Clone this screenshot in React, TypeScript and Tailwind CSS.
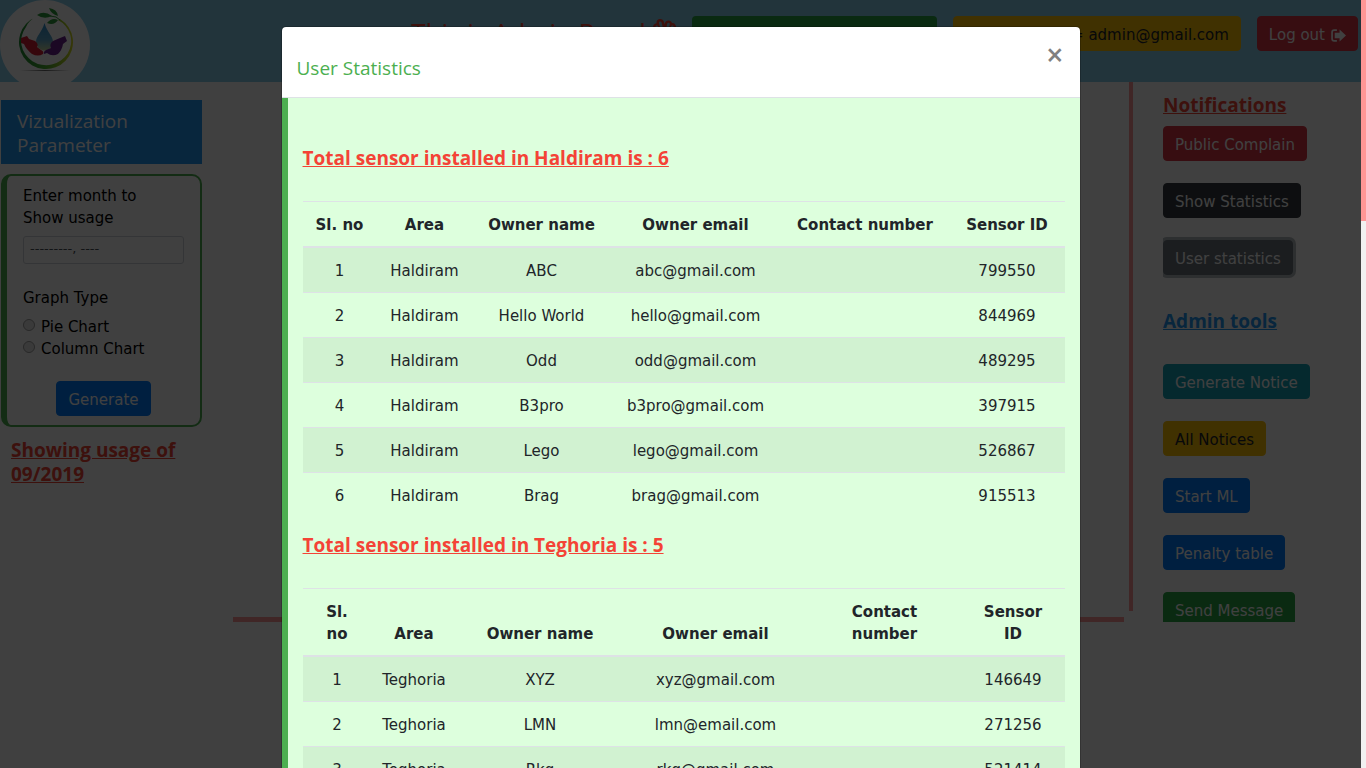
import React from "react";
import { FaRegHandSpock } from "react-icons/fa";

const sensorTables = [
  {
    title: "Total sensor installed in Haldiram is : 6",
    area: "Haldiram",
    cols: ["w-[73px]", "w-[97px]", "w-[137px]", "w-[171px]", "w-[168px]", "w-[116px]"],
    headings: [["Sl. no"], ["Area"], ["Owner name"], ["Owner email"], ["Contact number"], ["Sensor ID"]],
    rows: [
      ["ABC", "abc@gmail.com", "799550"],
      ["Hello World", "hello@gmail.com", "844969"],
      ["Odd", "odd@gmail.com", "489295"],
      ["B3pro", "b3pro@gmail.com", "397915"],
      ["Lego", "lego@gmail.com", "526867"],
      ["Brag", "brag@gmail.com", "915513"],
    ],
  },
  {
    title: "Total sensor installed in Teghoria is : 5",
    area: "Teghoria",
    cols: ["w-[68px]", "w-[86px]", "w-[166px]", "w-[185px]", "w-[153px]", "w-[104px]"],
    headings: [["Sl.", "no"], ["Area"], ["Owner name"], ["Owner email"], ["Contact", "number"], ["Sensor", "ID"]],
    rows: [
      ["XYZ", "xyz@gmail.com", "146649"],
      ["LMN", "lmn@email.com", "271256"],
      ["Rkg", "rkg@gmail.com", "521414"],
    ],
  },
];

const heading = "font-['Open_Sans',sans-serif] text-[19px] leading-6";
const btn = "rounded-[4px] border px-[11px] pt-[7px] pb-1 text-[15px] leading-[22px] whitespace-nowrap";

function Logo() {
  return (
    <svg viewBox="0 0 90 90" className="size-[90px] shrink-0" role="img" aria-label="Logo">
      <defs>
        <linearGradient id="ring" x1="0" y1="0" x2="1" y2="0">
          <stop offset="0" stopColor="#1c8a32" />
          <stop offset="0.5" stopColor="#4caf30" />
          <stop offset="1" stopColor="#d8dc20" />
        </linearGradient>
        <linearGradient id="drop" x1="0" y1="0" x2="0" y2="1">
          <stop offset="0" stopColor="#2f8fd0" />
          <stop offset="0.6" stopColor="#5ba8d0" />
          <stop offset="1" stopColor="#c8d8a0" />
        </linearGradient>
        <linearGradient id="shade" x1="0" y1="0" x2="1" y2="0">
          <stop offset="0" stopColor="#fff" />
          <stop offset="0.5" stopColor="#666" />
          <stop offset="1" stopColor="#fff" />
        </linearGradient>
      </defs>
      <circle cx="45" cy="45" r="45" fill="#fff" />
      <path fill="url(#ring)" d="M36 17A27 27 0 1 0 60 19L58 20A25 24 0 1 1 26 27Q29 20 36 17Z" />
      <path fill="#2f9c3c" d="M37 15Q44 10 52 16Q44 20 37 15ZM49 8Q57 9 58 16Q51 14 49 8ZM47 23Q52 17 58 20Q54 26 47 23Z" />
      <path fill="none" stroke="#2f9c3c" d="M50 16Q57 16 60 20" />
      <path fill="url(#drop)" d="M44.500 23C42 32 36 36 36 42A8.500 8.500 0 0 0 53 42C53 36 47 32 44.500 23Z" />
      <path fill="#d51f30" d="M21 38L27 36L29 39L35 41Q39 44 37 47L41 50Q44 51 43 54Q38 57 32 54Q26 49 24 44L21 43Z" />
      <path fill="#6b2390" d="M67 41L65 36L60 38L53 41Q49 44 51 48L46 50Q43 52 44 54L47 53Q52 57 58 54Q62 50 63 44Z" />
      <path fill="url(#shade)" d="M20 70H70V71H20Z" />
    </svg>
  );
}

function LogOutIcon() {
  return (
    <svg viewBox="0 0 14 12" className="h-[13px] w-[15px]" aria-hidden="true">
      <path fill="none" stroke="currentColor" strokeWidth="1.600" d="M5.500 1H3Q1 1 1 3V9Q1 11 3 11H5.500" />
      <path fill="currentColor" d="M8 0.500L14 6L8 11.500V8.500H3.500V3.500H8Z" />
    </svg>
  );
}

function Header() {
  return (
    <header className="flex h-[82px] items-start overflow-hidden bg-[#87ceeb]">
      <Logo />
      <div className="flex flex-1 items-start justify-end gap-4 pt-4 pr-[3px]">
        <h3 className="flex items-center gap-1 pt-[2px] font-['Open_Sans',sans-serif] text-[26px] leading-7 text-[#f44336]">
          This is Admin Panel <FaRegHandSpock />
        </h3>
        <button aria-label="Admin" className="h-[35px] w-[245px] rounded-[4px] bg-[#28a745]" />
        <button className={`${btn} w-[288px] border-[#ffc107] bg-[#ffc107] text-right text-[#212529]`}>
          = admin@gmail.com
        </button>
        <button className={`${btn} flex items-center gap-[6px] border-[#dc3545] bg-[#dc3545] text-white`}>
          Log out <LogOutIcon />
        </button>
      </div>
    </header>
  );
}

function Parameters() {
  return (
    <aside className="w-[201px] shrink-0 pt-[18px]">
      <h4 className={`${heading} bg-[#2196f3] px-4 pt-[9px] pb-[7px] text-white`}>
        Vizualization
        <br />
        Parameter
      </h4>
      <form className="mt-[10px] flex flex-col rounded-[10px] border-2 border-l-[6px] border-[#4caf50] px-4 pt-[9px] pb-[9px] text-[15px] leading-[22px]">
        <label htmlFor="month">
          Enter month to
          <br />
          Show usage
        </label>
        <input
          id="month"
          placeholder="---------, ----"
          className="mt-[7px] h-[28px] w-full rounded-[3px] border border-[#ced4da] px-[6px] pb-1 text-[13px] placeholder:text-[#495057]"
        />
        <fieldset className="mt-[23px]">
          <legend className="mb-[7px]">Graph Type</legend>
          {["Pie Chart", "Column Chart"].map((label) => (
            <label key={label} className="flex items-center gap-[6px]">
              <input
                type="radio"
                name="graph"
                className="mb-1 size-3 appearance-none rounded-full border border-[#a0a0a0] bg-[#e8e8e8]"
              />
              {label}
            </label>
          ))}
        </fieldset>
        <button type="button" className={`${btn} mt-[21px] self-center border-[#007bff] bg-[#007bff] text-white`}>
          Generate
        </button>
      </form>
      <h4 className={`${heading} mt-[11px] pl-[10px] font-bold text-[#f44336] underline`}>
        Showing usage of 09/2019
      </h4>
    </aside>
  );
}

function Tools() {
  return (
    <aside className="flex h-[540px] w-[198px] shrink-0 flex-col items-start gap-[22px] overflow-hidden pt-[11px] text-white">
      <div>
        <h4 className={`${heading} mb-[9px] font-bold text-[#f44336] underline`}>Notifications</h4>
        <button className={`${btn} border-[#dc3545] bg-[#dc3545]`}>Public Complain</button>
      </div>
      <button className={`${btn} border-[#343a40] bg-[#343a40]`}>Show Statistics</button>
      <button className={`${btn} border-[#6c757d] bg-[#6c757d] ring-3 ring-[#6c757d]/50`}>User statistics</button>
      <h4 className={`${heading} mt-3 mb-[9px] font-bold text-[#2196f3] underline`}>Admin tools</h4>
      <button className={`${btn} border-[#17a2b8] bg-[#17a2b8]`}>Generate Notice</button>
      <button className={`${btn} border-[#ffc107] bg-[#ffc107] text-[#212529]`}>All Notices</button>
      <button className={`${btn} border-[#007bff] bg-[#007bff]`}>Start ML</button>
      <button className={`${btn} border-[#007bff] bg-[#007bff]`}>Penalty table</button>
      <button className={`${btn} border-[#28a745] bg-[#28a745]`}>Send Message</button>
    </aside>
  );
}

function StatisticsModal() {
  return (
    <section
      role="dialog"
      aria-label="User Statistics"
      className="mx-auto mt-[26px] w-full max-w-[800px] rounded-[5px] border border-black/20 bg-white bg-clip-padding"
    >
      <div className="flex items-start justify-between border-b border-[#dee2e6] px-[15px] pt-[15px] pb-[14px]">
        <h4 className="pt-[11px] font-['Open_Sans',sans-serif] text-[19px] leading-[30px] text-[#4caf50]">
          User Statistics
        </h4>
        <button
          aria-label="Close"
          className="pr-px font-['Open_Sans',sans-serif] text-[30px] leading-[25px] font-semibold text-[#808080]"
        >
          ×
        </button>
      </div>
      <div className="border-l-[6px] border-[#4caf50] bg-[#ddffdd] px-[15px] pt-12">
        {sensorTables.map((t) => (
          <div key={t.area} className="mb-4">
            <h4 className={`${heading} mb-[31px] font-bold text-[#f44336] underline`}>{t.title}</h4>
            <table className="w-full table-fixed border-collapse text-center text-[15px] leading-[22px] text-[#212529]">
              <colgroup>
                {t.cols.map((c) => (
                  <col key={c} className={c} />
                ))}
              </colgroup>
              <thead>
                <tr className="border-t border-b-2 border-[#dee2e6]">
                  {t.headings.map((h) => (
                    <th key={h.join(" ")} className="pt-3 pb-[10px] pl-px align-bottom font-bold whitespace-nowrap">
                      {h.map((line) => (
                        <span key={line} className="block">
                          {line}
                        </span>
                      ))}
                    </th>
                  ))}
                </tr>
              </thead>
              <tbody>
                {t.rows.map(([name, email, id], i) => (
                  <tr key={id} className="border-t border-[#dee2e6] odd:bg-black/5">
                    {[i + 1, t.area, name, email, "", id].map((cell, c) => (
                      <td key={c} className="pt-3 pb-[10px] pl-px">
                        {cell}
                      </td>
                    ))}
                  </tr>
                ))}
              </tbody>
            </table>
          </div>
        ))}
      </div>
    </section>
  );
}

export default function App() {
  return (
    <div className="relative h-screen overflow-hidden bg-white font-['DejaVu_Sans',Verdana,sans-serif] text-black">
      <div className="pr-[5px]">
        <Header />
        <div className="flex">
          <div className="pl-px">
            <Parameters />
          </div>
          <main className="mr-[30px] ml-[31px] grid h-[540px] flex-1 grid-cols-[1fr_4px] grid-rows-[1fr_5px]">
            <div />
            <div className="mb-[6px] bg-[#ff9696]" />
            <div className="mr-[5px] bg-[#ff9696]" />
            <div />
          </main>
          <Tools />
        </div>
      </div>
      <div className="absolute inset-0 flex bg-black/75">
        <div className="flex-1">
          <StatisticsModal />
        </div>
        <div className="w-[5px] bg-[#f1f1f1]">
          <div className="h-[221px] bg-[#ff9696]" />
        </div>
      </div>
    </div>
  );
}
